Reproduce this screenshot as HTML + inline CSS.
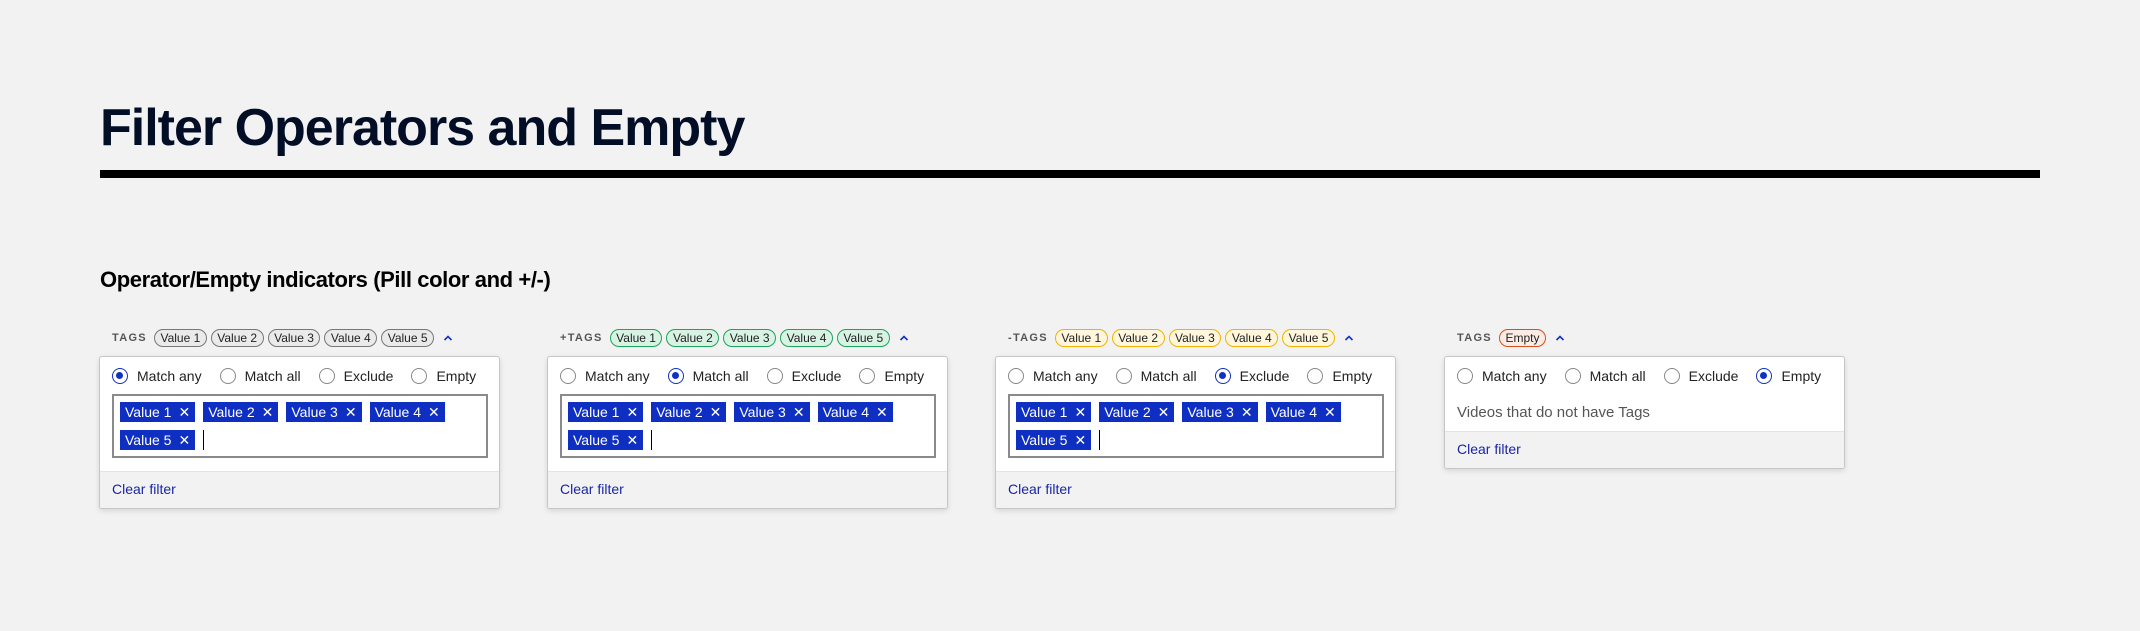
<!DOCTYPE html>
<html><head><meta charset="utf-8"><style>
*{box-sizing:border-box;margin:0;padding:0}
body{width:2140px;height:631px;background:#f2f2f2;font-family:"Liberation Sans",sans-serif;position:relative;overflow:hidden;color:#1a1a1a}
h1{position:absolute;left:100px;top:98px;font-size:52px;font-weight:bold;color:#020d26;letter-spacing:-1px;line-height:60px}
.rule{position:absolute;left:100px;top:170px;width:1940px;height:8px;background:#000}
h2{position:absolute;left:100px;top:266px;font-size:22px;font-weight:bold;color:#000;letter-spacing:-0.4px;line-height:28px}
.col{position:absolute;top:328px;width:401px}
.hdr{display:flex;align-items:center;height:20px;padding-left:13px}
.lbl{font-size:11px;font-weight:bold;letter-spacing:1.3px;color:#555;margin-right:7px}
.pill{font-size:12px;height:18px;line-height:16px;border:1px solid #777;background:#eaeaea;border-radius:9px;padding:0 5.5px;margin-right:4px;color:#222}
.g .pill{border-color:#1fa35c;background:#d8f3e3}
.y .pill{border-color:#f0b400;background:#fff6dc}
.e .pill{border-color:#d4511e;background:#fdece4}
.chev{margin-left:5px;width:10px;height:10px}
.panel{margin-top:8px;background:#fff;border:1px solid #c6c6c6;border-radius:3px;box-shadow:0 2px 6px rgba(0,0,0,.12);overflow:hidden}
.radios{display:flex;align-items:center;height:37px;padding-left:12px;font-size:14px;color:#222}
.r{display:flex;align-items:center;margin-right:18px}
.c{width:16px;height:16px;border:1px solid #888;border-radius:50%;margin-right:9px;position:relative;background:#fff}
.c.on{border-color:#1032c4;border-width:1.5px}
.c.on::after{content:"";position:absolute;left:3px;top:3px;width:7px;height:7px;border-radius:50%;background:#1032c4}
.box{margin:0 11px 13px 12px;height:64px;border:2px solid #8a8a8a;padding:6px 6px;display:flex;flex-wrap:wrap;align-content:flex-start;gap:8px 8px}
.chip{height:20px;background:#0e2fc2;color:#fff;font-size:14px;line-height:20px;padding:0 5px;display:flex;align-items:center}
.chip span{margin-left:7px;font-size:14px}
.cur{width:1px;height:20px;background:#000}
.foot{height:37px;background:#f2f2f2;border-top:1px solid #e3e3e3;padding-left:12px;font-size:14px;line-height:35px;color:#1a25a6}
.msg{height:37px;padding-left:12px;font-size:15px;line-height:37px;color:#555}
</style></head><body>
<h1>Filter Operators and Empty</h1>
<div class="rule"></div>
<h2>Operator/Empty indicators (Pill color and +/-)</h2>

<div class="col" style="left:99px">
<div class="hdr"><span class="lbl">TAGS</span><span class="pill">Value 1</span><span class="pill">Value 2</span><span class="pill">Value 3</span><span class="pill">Value 4</span><span class="pill">Value 5</span><svg class="chev" viewBox="0 0 10 10"><path d="M1.5 7 L5 3.5 L8.5 7" fill="none" stroke="#1032c4" stroke-width="1.6"/></svg></div>
<div class="panel"><div class="radios"><div class="r"><div class="c on"></div>Match any</div><div class="r"><div class="c"></div>Match all</div><div class="r"><div class="c"></div>Exclude</div><div class="r"><div class="c"></div>Empty</div></div>
<div class="box"><div class="chip">Value 1<span>✕</span></div><div class="chip">Value 2<span>✕</span></div><div class="chip">Value 3<span>✕</span></div><div class="chip">Value 4<span>✕</span></div><div class="chip">Value 5<span>✕</span></div><div class="cur"></div></div>
<div class="foot">Clear filter</div></div></div>

<div class="col g" style="left:547px">
<div class="hdr"><span class="lbl">+TAGS</span><span class="pill">Value 1</span><span class="pill">Value 2</span><span class="pill">Value 3</span><span class="pill">Value 4</span><span class="pill">Value 5</span><svg class="chev" viewBox="0 0 10 10"><path d="M1.5 7 L5 3.5 L8.5 7" fill="none" stroke="#1032c4" stroke-width="1.6"/></svg></div>
<div class="panel"><div class="radios"><div class="r"><div class="c"></div>Match any</div><div class="r"><div class="c on"></div>Match all</div><div class="r"><div class="c"></div>Exclude</div><div class="r"><div class="c"></div>Empty</div></div>
<div class="box"><div class="chip">Value 1<span>✕</span></div><div class="chip">Value 2<span>✕</span></div><div class="chip">Value 3<span>✕</span></div><div class="chip">Value 4<span>✕</span></div><div class="chip">Value 5<span>✕</span></div><div class="cur"></div></div>
<div class="foot">Clear filter</div></div></div>

<div class="col y" style="left:995px">
<div class="hdr"><span class="lbl">-TAGS</span><span class="pill">Value 1</span><span class="pill">Value 2</span><span class="pill">Value 3</span><span class="pill">Value 4</span><span class="pill">Value 5</span><svg class="chev" viewBox="0 0 10 10"><path d="M1.5 7 L5 3.5 L8.5 7" fill="none" stroke="#1032c4" stroke-width="1.6"/></svg></div>
<div class="panel"><div class="radios"><div class="r"><div class="c"></div>Match any</div><div class="r"><div class="c"></div>Match all</div><div class="r"><div class="c on"></div>Exclude</div><div class="r"><div class="c"></div>Empty</div></div>
<div class="box"><div class="chip">Value 1<span>✕</span></div><div class="chip">Value 2<span>✕</span></div><div class="chip">Value 3<span>✕</span></div><div class="chip">Value 4<span>✕</span></div><div class="chip">Value 5<span>✕</span></div><div class="cur"></div></div>
<div class="foot">Clear filter</div></div></div>

<div class="col e" style="left:1444px">
<div class="hdr"><span class="lbl">TAGS</span><span class="pill">Empty</span><svg class="chev" viewBox="0 0 10 10"><path d="M1.5 7 L5 3.5 L8.5 7" fill="none" stroke="#1032c4" stroke-width="1.6"/></svg></div>
<div class="panel"><div class="radios"><div class="r"><div class="c"></div>Match any</div><div class="r"><div class="c"></div>Match all</div><div class="r"><div class="c"></div>Exclude</div><div class="r"><div class="c on"></div>Empty</div></div>
<div class="msg">Videos that do not have Tags</div>
<div class="foot">Clear filter</div></div></div>
</body></html>
